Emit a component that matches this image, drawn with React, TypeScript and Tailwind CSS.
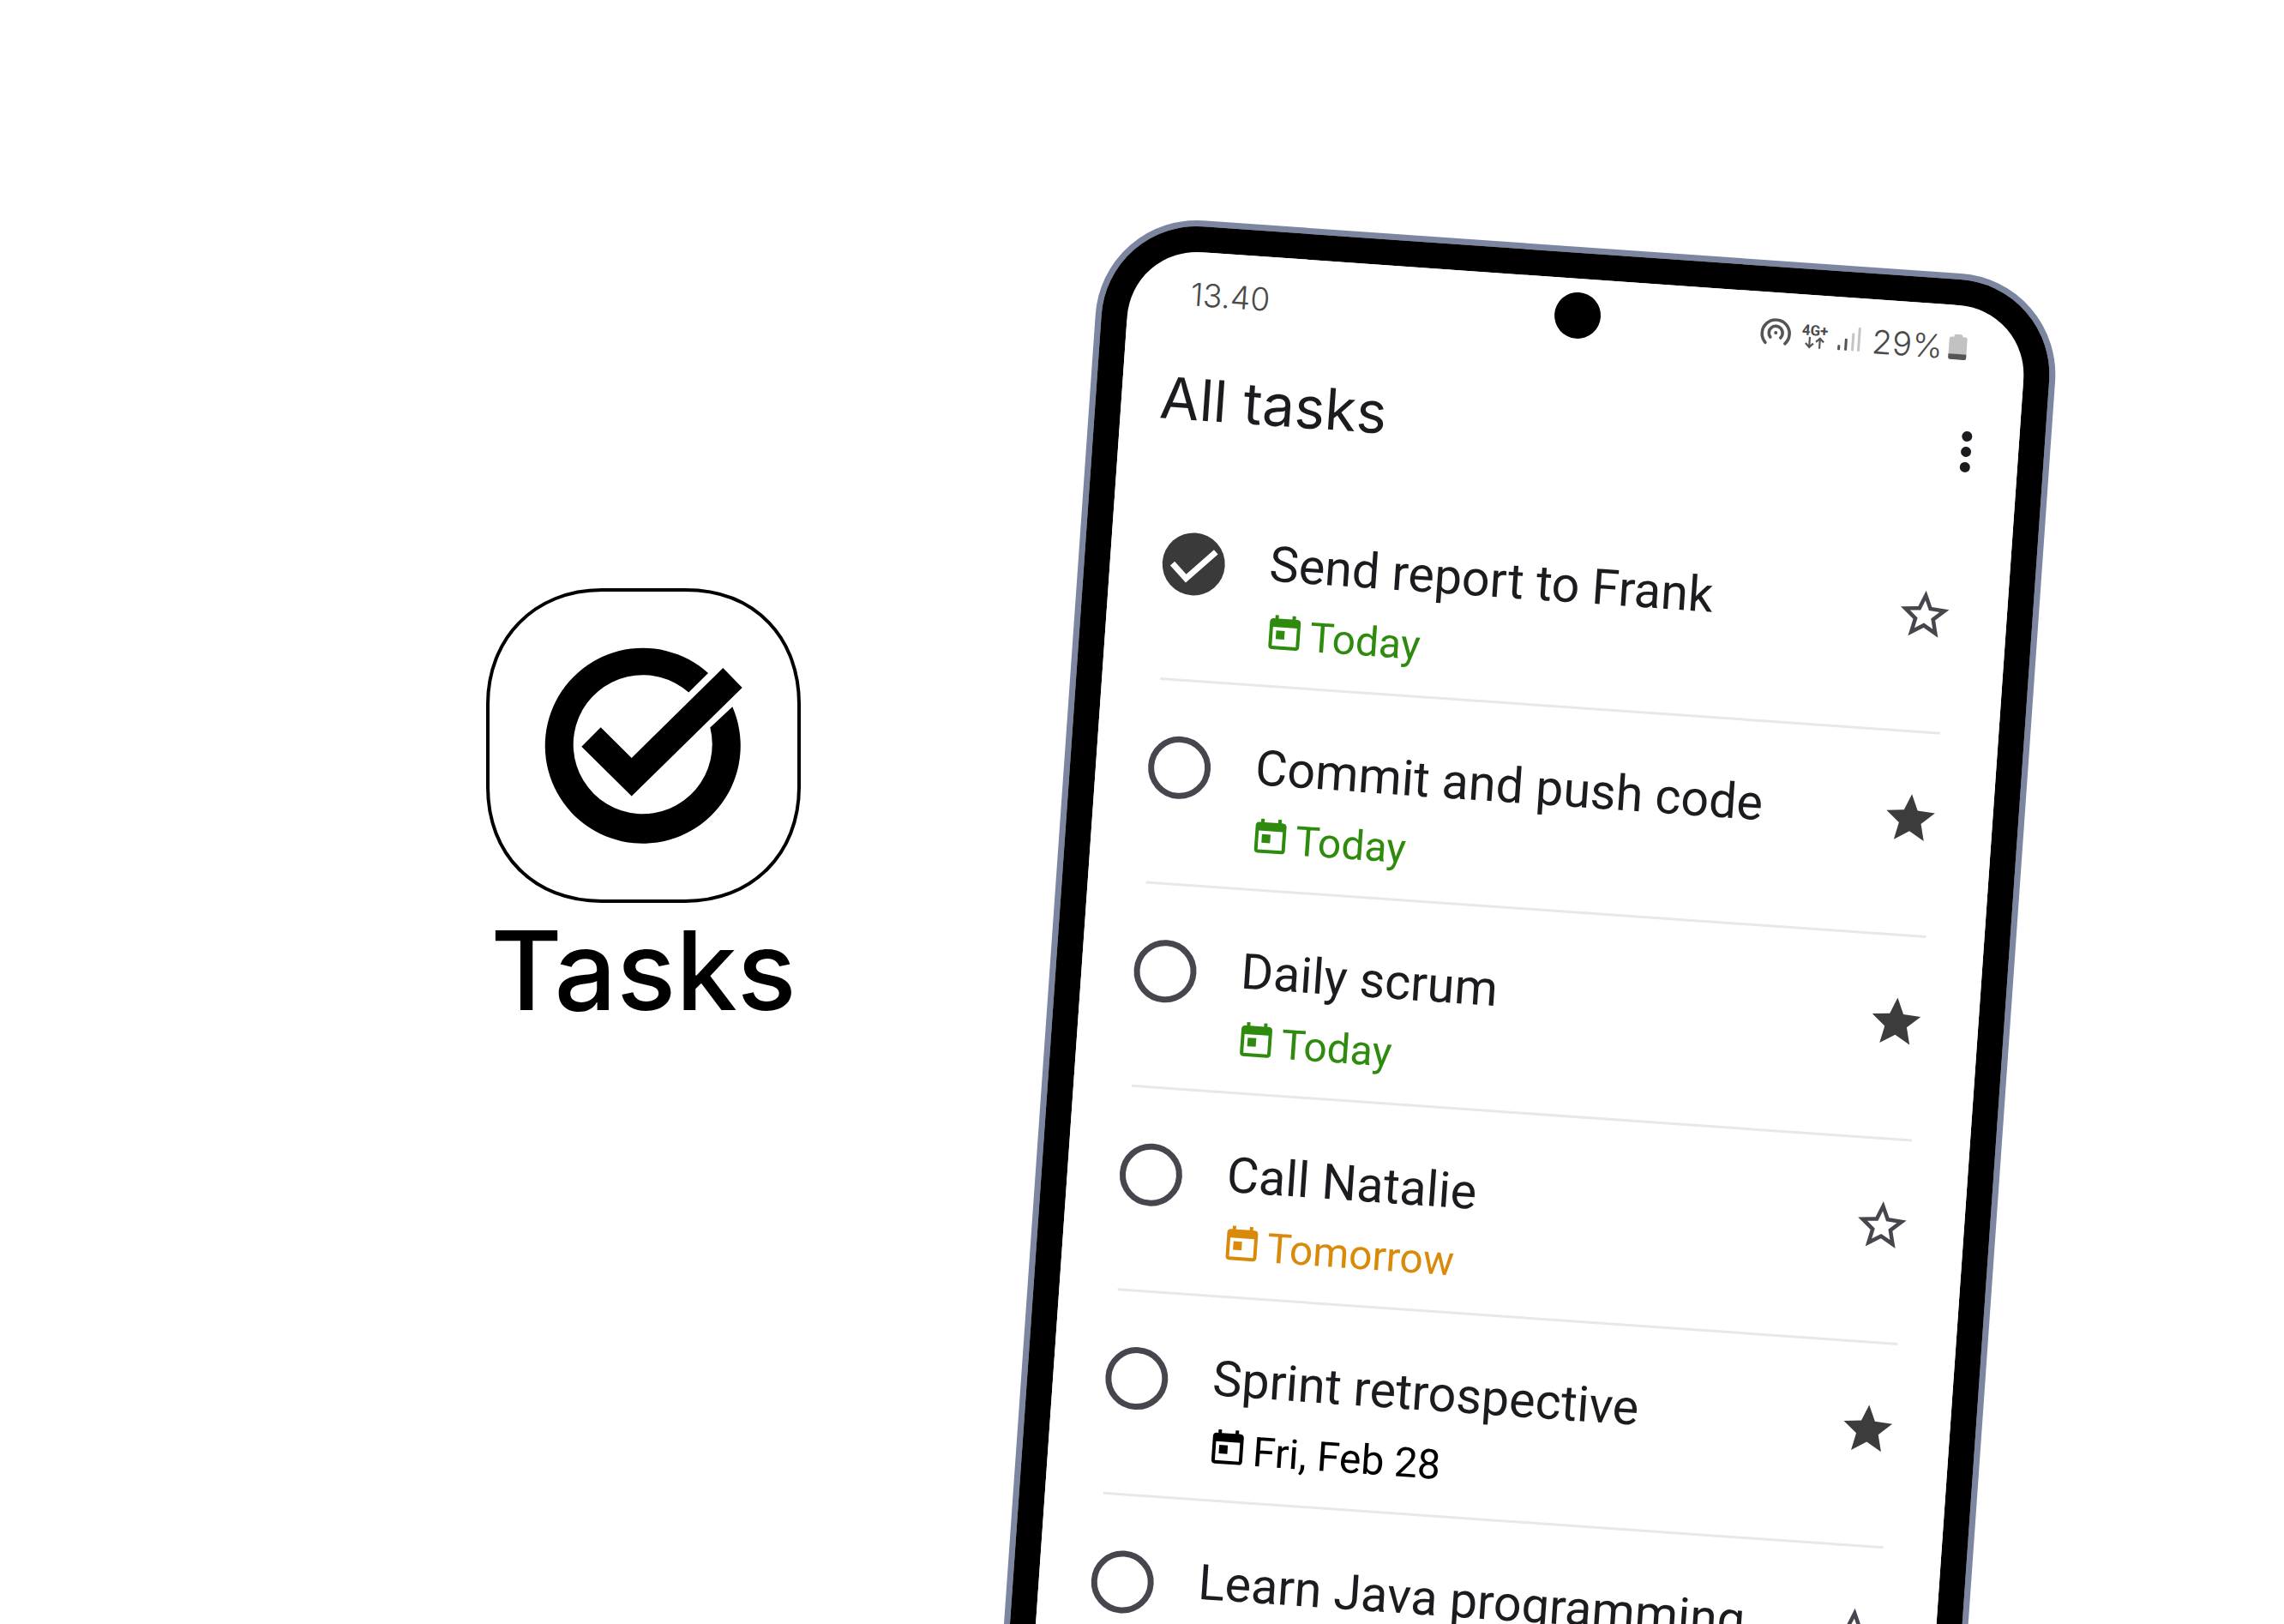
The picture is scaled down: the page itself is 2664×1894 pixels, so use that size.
import { Fragment } from "react";

const TODAY_PATH =
  "M19 3h-1V1h-2v2H8V1H6v2H5c-1.11 0-1.99.9-1.99 2L3 19c0 1.1.89 2 2 2h14c1.1 0 2-.9 2-2V5c0-1.1-.9-2-2-2zm0 16H5V8h14v11zM7 10h5v5H7z";
const STAR_FILLED = "M12 17.27L18.18 21l-1.64-7.03L22 9.24l-7.19-.61L12 2 9.19 8.63 2 9.24l5.46 4.73L5.82 21z";
const STAR_OUTLINE =
  "M22 9.24l-7.19-.62L12 2 9.19 8.63 2 9.24l5.46 4.73L5.82 21 12 17.27 18.18 21l-1.63-7.03L22 9.24zM12 15.4l-3.76 2.27 1-4.28-3.32-2.88 4.38-.38L12 6.1l1.71 4.04 4.38.38-3.32 2.88 1 4.28L12 15.4z";

interface Task {
  title: string;
  date?: string;
  color?: string;
  done?: boolean;
  starred?: boolean;
}

const tasks: Task[] = [
  { title: "Send report to Frank", date: "Today", color: "text-[#2e8b0e]", done: true },
  { title: "Commit and push code", date: "Today", color: "text-[#2e8b0e]", starred: true },
  { title: "Daily scrum", date: "Today", color: "text-[#2e8b0e]", starred: true },
  { title: "Call Natalie", date: "Tomorrow", color: "text-[#d98a0b]" },
  { title: "Sprint retrospective", date: "Fri, Feb 28", color: "text-black", starred: true },
  { title: "Learn Java programming" },
];

function AppIcon() {
  return (
    <svg width="367" height="367" viewBox="0 0 367 367" className="block shrink-0">
      <path
        d="M135 2H232C316 2 365 60 365 135V232C365 310 310 365 232 365H135C55 365 2 310 2 232V135C2 60 55 2 135 2Z"
        fill="white"
        stroke="black"
        strokeWidth="4"
      />
      <path d="M259 99A114 114 0 1 0 287.3 138.3L261.3 162.6A81 81 0 1 1 236.3 121.5Z" fill="black" />
      <path d="M111.3 184.7L133.7 162.2L169.7 197.9L276.3 92.9L298.7 116.1L169.7 242.6Z" fill="black" />
    </svg>
  );
}

function StatusIcons() {
  return (
    <div className="flex items-center text-[#4a4a4a]">
      <svg width="36" height="36" viewBox="0 0 36 36" fill="none" stroke="#555555" strokeWidth="3.6" strokeLinecap="round" className="shrink-0">
        <path d="M6.5 29A16 16 0 1 1 29.500 29" />
        <path d="M12 22.500A8 8 0 1 1 24 22.500" />
        <circle cx="18" cy="17" r="2" fill="#555555" stroke="none" />
      </svg>
      <div className="ml-[11px] flex w-[34px] flex-col items-center">
        <span className="font-['Roboto',sans-serif] text-[17px] leading-[16px] font-bold whitespace-nowrap">4G+</span>
        <svg width="26" height="15" viewBox="0 0 26 15" fill="none" stroke="#555555" strokeWidth="2.2" className="-mt-[1px]">
          <path d="M7 1V13M2.500 8.500L7 13L11.500 8.500" />
          <path d="M19 14V2M14.500 6.500L19 2L23.500 6.500" />
        </svg>
      </div>
      <svg width="28" height="30" viewBox="0 0 28 30" className="ml-[9px] shrink-0">
        <rect x="1" y="23" width="3" height="6" rx="1" fill="#555555" />
        <rect x="9" y="15" width="3" height="14" rx="1" fill="#555555" />
        <rect x="17" y="8" width="3" height="21" rx="1" fill="#c4c4c4" />
        <rect x="24" y="1" width="3" height="28" rx="1" fill="#c4c4c4" />
      </svg>
      <span className="mt-[2px] ml-[13px] font-['Inter',sans-serif] text-[38px] leading-[44px] font-light tracking-[0.5px] whitespace-nowrap">29%</span>
      <svg width="22" height="31" viewBox="0 0 22 31" className="ml-[6px] shrink-0">
        <path d="M6 3.500Q6 1 8 1H14Q16 1 16 3.500V4H19Q21.500 4 21.500 6.500V28Q21.500 30.500 19 30.500H3Q0.500 30.500 0.500 28V6.500Q0.500 4 3 4H6Z" fill="#c2c2c2" />
        <path d="M0.500 24H21.500V28Q21.500 30.500 19 30.500H3Q0.500 30.500 0.500 28Z" fill="#555555" />
      </svg>
    </div>
  );
}

function TaskRow({ task }: { task: Task }) {
  return (
    <div className="flex h-[235px] items-start pt-[64px]">
      {task.done ? (
        <div className="flex h-[73px] w-[73px] shrink-0 items-center justify-center rounded-full bg-[#3a3a3a]">
          <svg width="73" height="73" viewBox="0 0 73 73" fill="none" stroke="white" strokeWidth="7">
            <path d="M11.800 37.500L28.700 53.800L61.500 20.700" />
          </svg>
        </div>
      ) : (
        <div className="h-[73px] w-[73px] shrink-0 rounded-full border-[7px] border-[#49454f]" />
      )}
      <div className="ml-[51px] min-w-0 flex-1">
        <p className="-mt-[2px] ml-[1.500px] font-['Roboto',sans-serif] text-[57.500px] leading-[66px] whitespace-nowrap text-[#1c1b1f]">{task.title}</p>
        {task.date && (
          <div className={`mt-[21px] flex items-start ${task.color}`}>
            <svg width="48" height="48" viewBox="0 0 24 24" fill="currentColor" className="mt-[2px] shrink-0">
              <path d={TODAY_PATH} />
            </svg>
            <span className="ml-[6px] font-['Roboto',sans-serif] text-[48px] leading-[56px] whitespace-nowrap">{task.date}</span>
          </div>
        )}
      </div>
      <svg width="68" height="68" viewBox="0 0 24 24" className={`mt-[2px] shrink-0 ${task.starred ? "text-[#3c3c3c]" : "text-[#49454f]"}`} fill="currentColor">
        <path d={task.starred ? STAR_FILLED : STAR_OUTLINE} />
      </svg>
    </div>
  );
}

export default function App() {
  return (
    <div className="flex h-[1894px] w-[2664px] items-start overflow-hidden bg-white">
      <div className="mt-[686px] ml-[567px] flex w-[367px] shrink-0 flex-col items-center">
        <AppIcon />
        <h1 className="mt-[4px] font-['Inter',sans-serif] text-[128px] leading-[150px] font-medium whitespace-nowrap text-black">Tasks</h1>
      </div>

      <div className="mt-[249px] ml-[352px] h-[1900px] w-[1122px] shrink-0 origin-top-left rotate-[4deg] rounded-[118px] border-[7px] border-[#7d86a0]">
        <div className="h-full rounded-[111px] border-[30px] border-black">
          <div className="relative h-full overflow-hidden rounded-[90px] bg-white">
            <div className="absolute top-[16px] left-[497px] h-[54px] w-[54px] rounded-full bg-black" />

            <div className="flex h-[132px] items-start justify-between pt-[25px] pr-[68px] pl-[72px]">
              <span className="mt-[3px] font-['Inter',sans-serif] text-[37px] leading-[44px] font-light text-[#4a4a4a]">13.40</span>
              <StatusIcons />
            </div>

            <div className="flex h-[131px] items-start justify-between pr-[55px] pl-[45px]">
              <h2 className="font-['Inter',sans-serif] text-[67px] leading-[80px] font-normal text-[#1c1b1f]">All tasks</h2>
              <div className="mt-[14px] flex flex-col gap-[6px]">
                <div className="h-[12px] w-[12px] rounded-full bg-[#1c1b1f]" />
                <div className="h-[12px] w-[12px] rounded-full bg-[#1c1b1f]" />
                <div className="h-[12px] w-[12px] rounded-full bg-[#1c1b1f]" />
              </div>
            </div>

            <div className="pr-[62px] pl-[60.500px]">
              {tasks.map((task) => (
                <Fragment key={task.title}>
                  <TaskRow task={task} />
                  <div className="mr-[6px] ml-[7.500px] h-[3px] bg-[#e8e8e8]" />
                </Fragment>
              ))}
            </div>
          </div>
        </div>
      </div>
    </div>
  );
}
